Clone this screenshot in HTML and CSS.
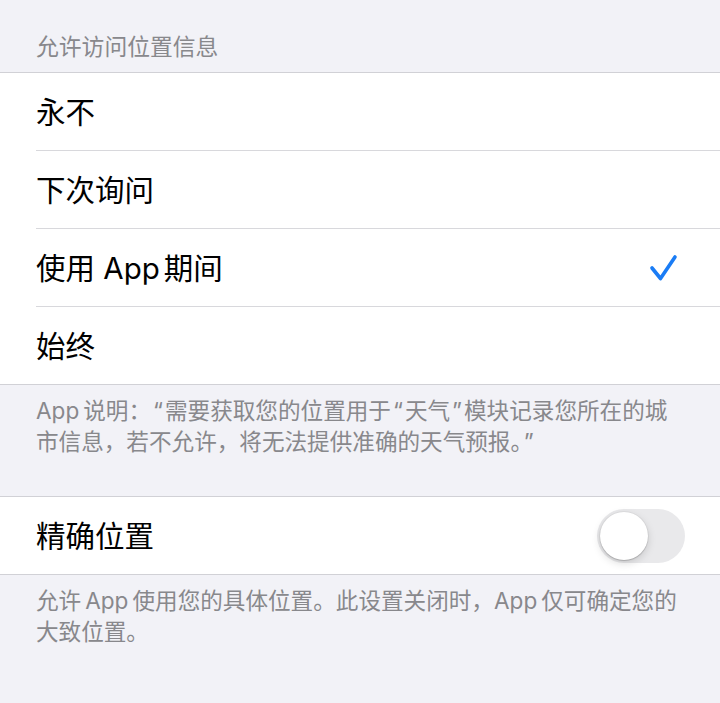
FILE: index.html
```html
<!DOCTYPE html>
<html lang="zh-CN">
<head>
<meta charset="UTF-8">
<meta name="viewport" content="width=device-width, initial-scale=1.0">
<title>位置</title>
<link rel="stylesheet" href="styles.css">
</head>
<body>

<div class="section-header">允许访问位置信息</div>

<div class="group">
  <div class="row"><div class="row-body"><span class="row-title">永不</span></div></div>
  <div class="row"><div class="row-body"><span class="row-title">下次询问</span></div></div>
  <div class="row">
    <div class="row-body">
      <span class="row-title">使用 <span class="en-tail">App</span>期间</span>
      <svg class="check" width="30" height="28" viewBox="0 0 30 28">
        <path d="M4 14 L12.5 24.5 L27 3" fill="none" stroke="#1a7cf5" stroke-width="3.6" stroke-linecap="round" stroke-linejoin="round"/>
      </svg>
    </div>
  </div>
  <div class="row"><div class="row-body last"><span class="row-title">始终</span></div></div>
</div>

<div class="section-footer"><span class="en-tail">App</span>说明：<span class="q">“</span>需要获取您的位置用于<span class="q">“</span>天气<span class="q">”</span>模块记录您所在的城<br>市信息，若不允许，将无法提供准确的天气预报。<span class="q">”</span></div>

<div class="group second">
  <div class="row">
    <div class="row-body last">
      <span class="row-title">精确位置</span>
      <div class="switch"><div class="knob"></div></div>
    </div>
  </div>
</div>

<div class="section-footer">允许<span class="en">App</span>使用您的具体位置。此设置关闭时，<span class="en-tail">App</span>仅可确定您的<br>大致位置。</div>

</body>
</html>
```

FILE: styles.css
```css
body {
  margin: 0;
  background-color: #f2f2f7;
  font-family: Inter, "Noto Sans CJK SC", sans-serif;
  color: #000;
}
.section-header {
  padding: 32px 36px 10px;
  font-size: 22.8px;
  line-height: 30px;
  color: #88888c;
}
.group {
  background: #fff;
  border-top: 1px solid #d1d1d6;
  border-bottom: 1px solid #d1d1d6;
}
.group.second {
  margin-top: 39px;
}
.row {
  padding-left: 36px;
}
.row-body {
  height: 77px;
  display: flex;
  align-items: center;
  justify-content: space-between;
  border-bottom: 1px solid #d8d8dc;
  padding-right: 42px;
}
.row-body.last {
  border-bottom: none;
}
.row-title {
  font-size: 29.5px;
  line-height: 40px;
}
/* latin words inside chinese text get a little air around them */
.en {
  margin: 0 4px;
}
.en-tail {
  margin-right: 4px;
}
.q {
  margin: 0 2px;
}
.check {
  display: block;
}
.switch {
  width: 88px;
  height: 54px;
  border-radius: 27px;
  background: #e9e9eb;
  margin-right: -7px;
  position: relative;
}
.knob {
  position: absolute;
  left: 3px;
  top: 3px;
  width: 48px;
  height: 48px;
  border-radius: 50%;
  background: #fff;
  box-shadow: 0 3px 8px rgba(0, 0, 0, 0.15), 0 1px 1px rgba(0, 0, 0, 0.16), 0 0 0 1px rgba(0, 0, 0, 0.04);
}
.section-footer {
  padding: 10px 36px 0;
  font-size: 22.6px;
  line-height: 31px;
  color: #88888c;
}
```
